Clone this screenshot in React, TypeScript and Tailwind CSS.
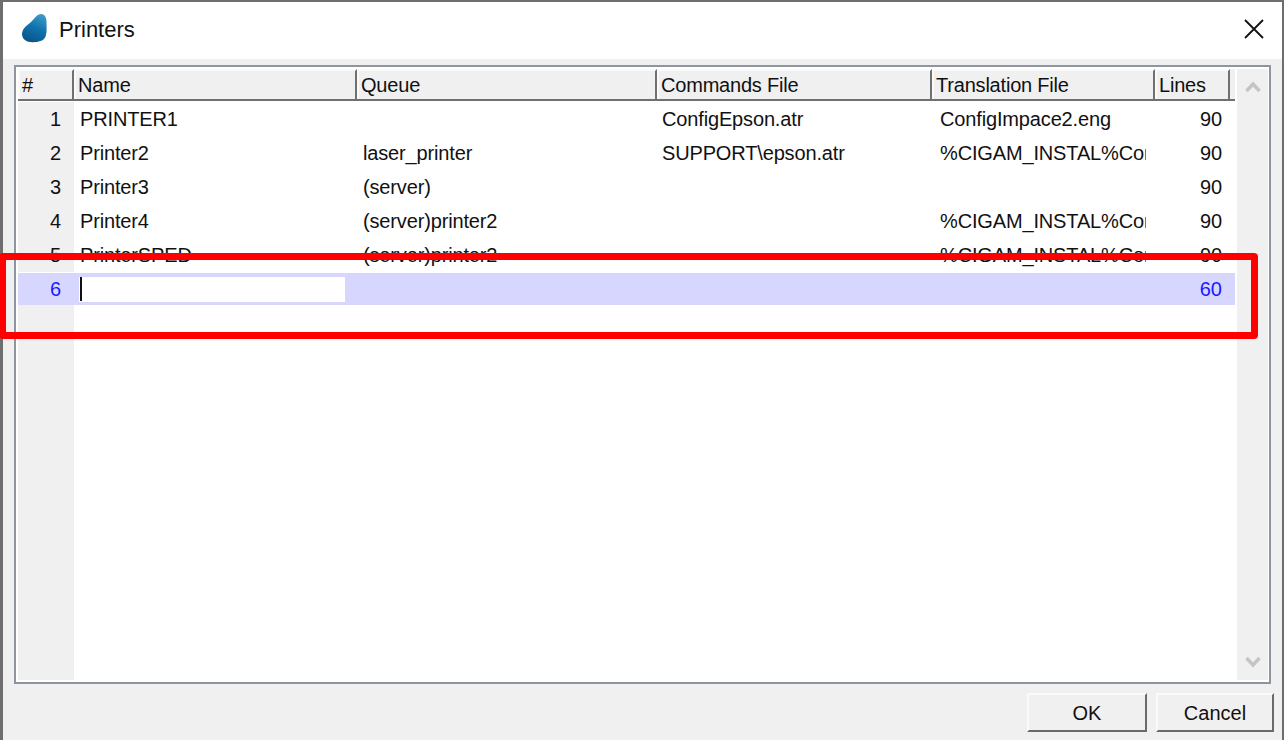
const columns = [
  { label: "#", className: "w-[56px]" },
  { label: "Name", className: "w-[283px]" },
  { label: "Queue", className: "w-[300px]" },
  { label: "Commands File", className: "w-[275px]" },
  { label: "Translation File", className: "w-[223px]" },
  { label: "Lines", className: "w-[75px]" },
];

const rows = [
  { n: 1, name: "PRINTER1", queue: "", commands: "ConfigEpson.atr", translation: "ConfigImpace2.eng", lines: 90 },
  { n: 2, name: "Printer2", queue: "laser_printer", commands: "SUPPORT\\epson.atr", translation: "%CIGAM_INSTAL%Config", lines: 90 },
  { n: 3, name: "Printer3", queue: "(server)", commands: "", translation: "", lines: 90 },
  { n: 4, name: "Printer4", queue: "(server)printer2", commands: "", translation: "%CIGAM_INSTAL%Config", lines: 90 },
  { n: 5, name: "PrinterSPED", queue: "(server)printer2", commands: "", translation: "%CIGAM_INSTAL%Config", lines: 90 },
];

function Row({ r }: { r: (typeof rows)[number] }) {
  return (
    <div className="flex h-[34.1px] items-center text-[20px] tracking-[-0.15px] text-[#111]">
      <div className="flex h-full w-[56px] items-center justify-end bg-[#f0f0f0] pr-[13px]">{r.n}</div>
      <div className="w-[283px] pl-[6px]">{r.name}</div>
      <div className="w-[300px] pl-[6px]">{r.queue}</div>
      <div className="w-[275px] pl-[5px] whitespace-nowrap">{r.commands}</div>
      <div className="w-[214px] overflow-hidden pl-[8px] whitespace-nowrap">{r.translation}</div>
      <div className="w-[76px] pl-[8px] text-right">{r.lines}</div>
    </div>
  );
}

export default function App() {
  return (
    <div className="relative h-[740px] w-[1285px] overflow-hidden bg-white font-['Liberation_Sans',Arial,sans-serif]">
      <div className="flex h-full w-[1284px] flex-col border-t-[2px] border-r-[2px] border-l-[3px] border-[#6e6e6e]">
        <div className="flex h-[57px] shrink-0 items-center bg-white pr-[17px] pl-[17px]">
          <svg width="30" height="32" viewBox="0 0 30 32" className="mr-[9px] mb-[3px]" aria-hidden="true">
            <defs>
              <linearGradient id="drop" x1="0.75" y1="0" x2="0.35" y2="1">
                <stop offset="0" stopColor="#3f9ac6" />
                <stop offset="0.5" stopColor="#0f72ad" />
                <stop offset="1" stopColor="#0a5488" />
              </linearGradient>
            </defs>
            <path
              d="M21 1 C25 1 27 5 26.5 10 C26.5 14 27 18 26 22 C25 27 20 29 15 29 C8 30 2 27 2 21 C2 15 8 12 12 8 C15 5 17 1 21 1 Z"
              fill="url(#drop)"
            />
          </svg>
          <span className="mb-[2px] text-[22px] text-[#111]">Printers</span>
          <svg width="22" height="22" viewBox="0 0 22 22" className="mb-[4px] ml-auto" aria-hidden="true">
            <path d="M2 2 L20 20 M20 2 L2 20" stroke="#111" strokeWidth="1.8" fill="none" />
          </svg>
        </div>

        <div className="flex min-h-0 flex-1 flex-col bg-[#f0f0f0] pt-[6px] pr-[11px] pl-[11px]">
          <div className="flex min-h-0 flex-1 border-[2px] border-[#8f959e] bg-white py-[2px] pr-[1px] pl-[2px]">
            <div className="flex min-w-0 flex-1 flex-col">
              <div className="flex h-[32px] shrink-0 border-b-[2px] border-[#6f6f6f] bg-[#f0f0f0] text-[20px] tracking-[-0.2px] text-[#111]">
                {columns.map((c) => (
                  <div
                    key={c.label}
                    className={`${c.className} flex items-center overflow-hidden border-t-[2px] border-r-[2px] border-l-[2px] border-t-[#fafafa] border-r-[#707070] border-l-[#fafafa] pl-[2px] whitespace-nowrap`}
                  >
                    {c.label}
                  </div>
                ))}
              </div>
              <div className="flex min-h-0 flex-1 flex-col pt-[1px]">
                {rows.map((r) => (
                  <Row key={r.n} r={r} />
                ))}
                <div className="mt-[1px] flex h-[32px] items-center bg-[#d6d6fe] text-[20px] text-[#1a1aff]">
                  <div className="w-[56px] pr-[13px] text-right">6</div>
                  <div className="ml-[5px] flex h-[25px] w-[266px] items-center bg-white pl-[1px]">
                    <div className="h-[24px] w-[2px] bg-[#111]" />
                  </div>
                  <div className="flex-1 pr-[13px] text-right">60</div>
                </div>
                <div className="w-[56px] flex-1 bg-[#f0f0f0]" />
              </div>
            </div>
            <div className="ml-[2px] flex w-[31px] shrink-0 flex-col items-center justify-between bg-[#f0f0f0] py-[12px]">
              <svg width="16" height="12" viewBox="0 0 16 12" aria-hidden="true">
                <path d="M1.5 10 L8 3 L14.5 10" stroke="#c4c4c4" strokeWidth="3.5" fill="none" />
              </svg>
              <svg width="16" height="12" viewBox="0 0 16 12" aria-hidden="true">
                <path d="M1.5 2 L8 9 L14.5 2" stroke="#c4c4c4" strokeWidth="3.5" fill="none" />
              </svg>
            </div>
          </div>
        </div>

        <div className="flex h-[56px] shrink-0 items-start justify-end gap-[9px] bg-[#f0f0f0] pt-[9px] pr-[8px]">
          <div className="flex h-[39px] w-[120px] items-center justify-center border-[2px] border-t-[#fafafa] border-r-[#6a6a6a] border-b-[#6a6a6a] border-l-[#fafafa] text-[20px] text-[#111]">
            OK
          </div>
          <div className="flex h-[39px] w-[118px] items-center justify-center border-[2px] border-t-[#fafafa] border-r-[#6a6a6a] border-b-[#6a6a6a] border-l-[#fafafa] text-[20px] text-[#111]">
            Cancel
          </div>
        </div>
      </div>

      <div className="absolute top-[253px] left-[-1px] h-[86px] w-[1259px] rounded-[4px] border-[7px] border-[#ff0000]" />
    </div>
  );
}
